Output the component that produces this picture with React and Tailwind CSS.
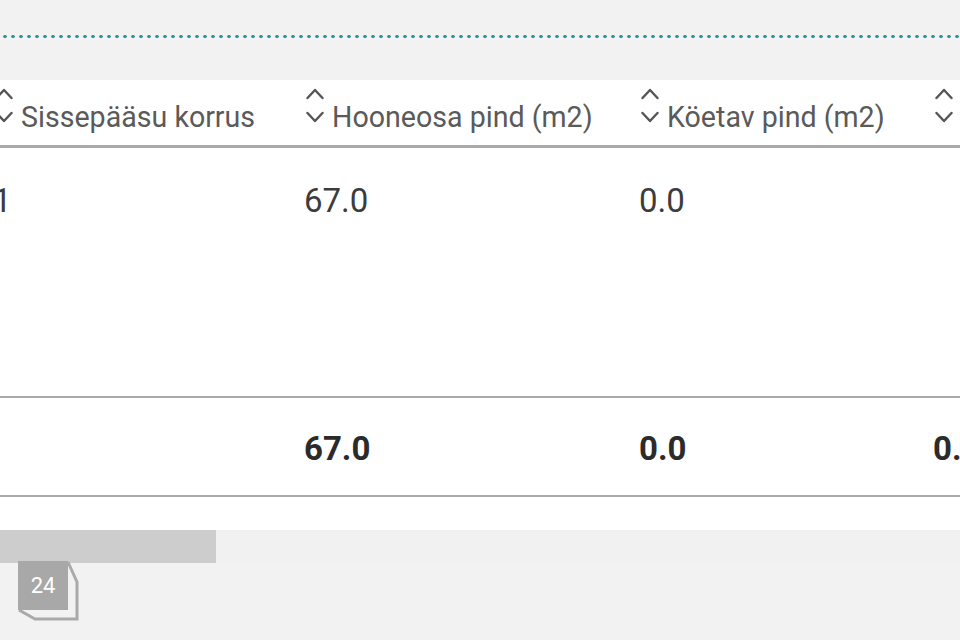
const COLS = [
  { label: 'Sissepääsu korrus', width: 311, value: '1', total: '' },
  { label: 'Hooneosa pind (m2)', width: 335, value: '67.0', total: '67.0' },
  { label: 'Köetav pind (m2)', width: 294, value: '0.0', total: '0.0' },
  { label: 'Kasulik pind (m2)', width: 300, value: '', total: '0.0' },
]

function SortIcon() {
  return (
    <svg width="20" height="36" viewBox="0 0 20 36" className="shrink-0 mr-[8px] -mt-[13px]">
      <polyline points="3.5,11 11,3 18.5,11" fill="none" stroke="#555" strokeWidth="2.4" strokeLinecap="round" strokeLinejoin="round" />
      <polyline points="3.5,26 11,34 18.5,26" fill="none" stroke="#555" strokeWidth="2.4" strokeLinecap="round" strokeLinejoin="round" />
    </svg>
  )
}

function PageBadge({ n }) {
  return (
    <div className="absolute left-[18px] top-[561px] w-[62px] h-[61px]">
      <svg width="62" height="61" className="absolute left-0 top-0">
        <polyline
          points="50,1 59,21 59,58 17,58 1,49"
          fill="none"
          stroke="#aaaaaa"
          strokeWidth="3"
        />
      </svg>
      <div className="absolute left-0 top-0 w-[50px] h-[49px] bg-[#a8a8a8] flex items-center justify-center text-white text-[22px] font-['Roboto',sans-serif]">
        {n}
      </div>
    </div>
  )
}

export default function App() {
  return (
    <div className="relative w-[960px] h-[640px] overflow-hidden bg-[#f2f2f2] font-['Roboto',sans-serif]">
      <div className="h-[35px]" />
      <div className="h-[3px] bg-[radial-gradient(circle,#2f9696_1.6px,transparent_1.9px)] bg-[length:8px_3px] bg-[position:1px_0]" />
      <div className="h-[42px]" />

      <div className="bg-white overflow-hidden">
        <div className="-ml-[7px] w-[1300px]">
          {/* header */}
          <div className="flex h-[68px] pt-[20px] border-b-[3px] border-[#a9a9a9]">
            {COLS.map(c => (
              <div key={c.label} style={{ width: c.width }} className="flex items-start shrink-0">
                <SortIcon />
                <span className="text-[28.6px] leading-[34px] text-[#5a5a5a] whitespace-nowrap">{c.label}</span>
              </div>
            ))}
          </div>

          {/* body */}
          <div className="flex h-[250px] pt-[33px] border-b-2 border-[#a9a9a9]">
            {COLS.map(c => (
              <div key={c.label} style={{ width: c.width }} className="shrink-0">
                <span className="text-[33px] leading-[40px] text-[#3c3c3c]">{c.value}</span>
              </div>
            ))}
          </div>

          {/* totals */}
          <div className="flex h-[99px] pt-[31px] border-b-2 border-[#a9a9a9]">
            {COLS.map(c => (
              <div key={c.label} style={{ width: c.width }} className="shrink-0">
                <span className="text-[33px] leading-[40px] font-bold text-[#2b2b2b]">{c.total}</span>
              </div>
            ))}
          </div>
        </div>
        <div className="h-[33px]" />
      </div>

      {/* horizontal scrollbar */}
      <div className="h-[33px] bg-[#f1f1f1]">
        <div className="w-[216px] h-full bg-[#cdcdcd]" />
      </div>

      <PageBadge n={24} />
    </div>
  )
}
